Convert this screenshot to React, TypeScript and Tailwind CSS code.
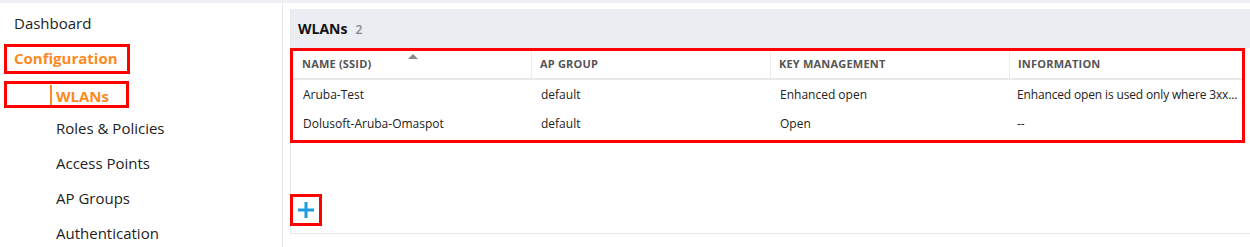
import React from 'react';

const navItems = ['Roles & Policies', 'Access Points', 'AP Groups', 'Authentication'];

const rows = [
  { name: 'Aruba-Test', group: 'default', key: 'Enhanced open', info: 'Enhanced open is used only where 3xx...' },
  { name: 'Dolusoft-Aruba-Omaspot', group: 'default', key: 'Open', info: '--' },
];

const Sidebar = () => {
  return (
    <div className="w-[283px] shrink-0 pt-[3px] border-r border-[#e4e6e9] text-[15px] text-[#222]">
      <div className="h-[35px] flex items-center pl-[14px]">Dashboard</div>
      <div className="h-[35px] flex items-center">
        <div className="ml-[4px] h-[30px] w-[126px] border-[3px] border-[#ff0000] flex items-center pl-[7px] font-bold text-[#fb8a22]">
          Configuration
        </div>
      </div>
      <div className="h-[35px] flex items-center">
        <div className="ml-[4px] mt-[2px] h-[27px] w-[125px] border-[3px] border-[#ff0000] flex items-center font-bold text-[#fb8a22]">
          <span className="ml-[43px] w-[2px] h-[20px] bg-[#fb8a22]" />
          <span className="ml-[4px] mt-[3px]">WLANs</span>
        </div>
      </div>
      {navItems.map((item) => (
        <div key={item} className="h-[35px] flex items-center pl-[56px]">
          {item}
        </div>
      ))}
    </div>
  );
};

const WlanTable = () => {
  const cols = 'grid grid-cols-[239px_239px_239px_1fr]';
  return (
    <div className="mr-[5px] border-[3px] border-[#ff0000] pb-[2px]">
      <div className={`${cols} h-[29px] border-b-2 border-[#e8e9eb] text-[11px] font-bold uppercase text-[#555] tracking-[0.2px]`}>
        <div className="relative flex items-center pl-[9px] border-r border-[#ececec]">
          Name (SSID)
          <span className="absolute left-[115px] top-[3px] w-0 h-0 border-l-[5px] border-r-[5px] border-b-[5px] border-l-transparent border-r-transparent border-b-[#888]" />
        </div>
        <div className="flex items-center pl-[8px] border-r border-[#ececec]">AP Group</div>
        <div className="flex items-center pl-[8px] border-r border-[#ececec]">Key Management</div>
        <div className="flex items-center pl-[8px]">Information</div>
      </div>
      {rows.map((r) => (
        <div key={r.name} className={`${cols} h-[29px] text-[12px] text-[#222]`}>
          <div className="flex items-center pl-[10px]">{r.name}</div>
          <div className="flex items-center pl-[9px]">{r.group}</div>
          <div className="flex items-center pl-[9px]">{r.key}</div>
          <div className="flex items-center pl-[7px] whitespace-nowrap tracking-[-0.15px]">{r.info}</div>
        </div>
      ))}
    </div>
  );
};

const App = () => {
  return (
    <div className="w-[1250px] h-[247px] overflow-hidden bg-white border-t-[3px] border-[#eef0f3] flex font-['Open_Sans',sans-serif]">
      <Sidebar />
      <div className="flex-1 pl-[7px] pt-[6px]">
        <div className="h-[225px] border-l border-b border-[#e6e7e9] flex flex-col">
          <div className="h-[39px] bg-[#eaedf1] flex items-center pl-[7px] gap-[8px]">
            <span className="text-[14px] font-bold text-[#111]">WLANs</span>
            <span className="text-[12px] font-semibold text-[#888] mt-[2px]">2</span>
          </div>
          <div className="-ml-px">
            <WlanTable />
          </div>
          <div className="-ml-px mt-[51px]">
            <button className="w-[32px] h-[32px] border-[3px] border-[#ff0000] flex items-center justify-center">
              <svg width="18" height="18" viewBox="0 0 18 18">
                <path d="M9 1v16M1 9h16" stroke="#1b9be2" strokeWidth="3" fill="none" />
              </svg>
            </button>
          </div>
        </div>
      </div>
    </div>
  );
};

export default App;
